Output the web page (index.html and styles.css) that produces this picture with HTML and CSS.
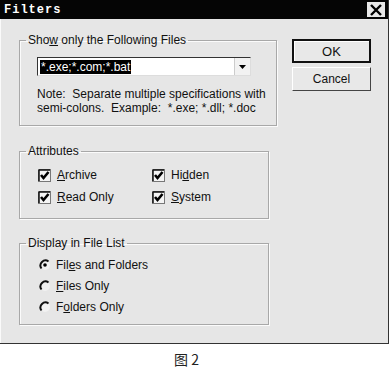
FILE: index.html
```html
<!DOCTYPE html>
<html lang="en">
<head>
  <meta charset="UTF-8">
  <title>Filters</title>
  <link rel="stylesheet" href="styles.css">
</head>
<body>
  <div class="dialog">
    <div class="titlebar">
      <span class="title">Filters</span>
      <span class="close">
        <svg width="14" height="12" viewBox="0 0 14 12"><path d="M2 1 L12 11 M12 1 L2 11" stroke="#000" stroke-width="2.4"/></svg>
      </span>
    </div>

    <div class="dialog-body">
      <div class="groups">
        <fieldset class="group group-files">
          <legend>Sho<u>w</u> only the Following Files</legend>
          <div class="combo">
            <span class="combo-value"><span class="selected">*.exe;*.com;*.bat</span></span>
            <span class="combo-btn">
              <svg width="7" height="4" viewBox="0 0 7 4"><path d="M0 0 H7 L3.5 4 Z" fill="#000"/></svg>
            </span>
          </div>
          <p class="note">Note:  Separate multiple specifications with
semi-colons.  Example:  *.exe; *.dll; *.doc</p>
        </fieldset>

        <fieldset class="group group-attrs">
          <legend>Attributes</legend>
          <div class="checks">
            <label class="check"><span class="box"><svg width="13" height="13" viewBox="0 0 13 13"><rect x="0.5" y="0.5" width="12" height="12" fill="#f4f4f4" stroke="#777"/><path d="M1 1 H12 M1 1 V12" stroke="#111" stroke-width="1.5"/><path d="M3 6 L5.5 9 L10.5 3" fill="none" stroke="#000" stroke-width="2.6"/></svg></span><span><u>A</u>rchive</span></label>
            <label class="check"><span class="box"><svg width="13" height="13" viewBox="0 0 13 13"><rect x="0.5" y="0.5" width="12" height="12" fill="#f4f4f4" stroke="#777"/><path d="M1 1 H12 M1 1 V12" stroke="#111" stroke-width="1.5"/><path d="M3 6 L5.5 9 L10.5 3" fill="none" stroke="#000" stroke-width="2.6"/></svg></span><span>Hi<u>d</u>den</span></label>
            <label class="check"><span class="box"><svg width="13" height="13" viewBox="0 0 13 13"><rect x="0.5" y="0.5" width="12" height="12" fill="#f4f4f4" stroke="#777"/><path d="M1 1 H12 M1 1 V12" stroke="#111" stroke-width="1.5"/><path d="M3 6 L5.5 9 L10.5 3" fill="none" stroke="#000" stroke-width="2.6"/></svg></span><span><u>R</u>ead Only</span></label>
            <label class="check"><span class="box"><svg width="13" height="13" viewBox="0 0 13 13"><rect x="0.5" y="0.5" width="12" height="12" fill="#f4f4f4" stroke="#777"/><path d="M1 1 H12 M1 1 V12" stroke="#111" stroke-width="1.5"/><path d="M3 6 L5.5 9 L10.5 3" fill="none" stroke="#000" stroke-width="2.6"/></svg></span><span><u>S</u>ystem</span></label>
          </div>
        </fieldset>

        <fieldset class="group group-display">
          <legend>Display in File List</legend>
          <div class="radios">
            <label class="radio"><span class="dot"><svg width="12" height="12" viewBox="0 0 12 12"><circle cx="6" cy="6" r="5" fill="#f2f2f2"/><path d="M9.5 2.5 A5 5 0 0 0 2.5 9.5" fill="none" stroke="#111" stroke-width="2"/><circle cx="6" cy="6" r="1.8" fill="#000"/></svg></span><span>Fil<u>e</u>s and Folders</span></label>
            <label class="radio"><span class="dot"><svg width="12" height="12" viewBox="0 0 12 12"><circle cx="6" cy="6" r="5" fill="#f2f2f2"/><path d="M9.5 2.5 A5 5 0 0 0 2.5 9.5" fill="none" stroke="#111" stroke-width="2"/></svg></span><span><u>F</u>iles Only</span></label>
            <label class="radio"><span class="dot"><svg width="12" height="12" viewBox="0 0 12 12"><circle cx="6" cy="6" r="5" fill="#f2f2f2"/><path d="M9.5 2.5 A5 5 0 0 0 2.5 9.5" fill="none" stroke="#111" stroke-width="2"/></svg></span><span>F<u>o</u>lders Only</span></label>
          </div>
        </fieldset>
      </div>

      <div class="buttons">
        <button class="btn btn-default">OK</button>
        <button class="btn">Cancel</button>
      </div>
    </div>
  </div>

  <div class="caption">图 2</div>
</body>
</html>
```

FILE: styles.css
```css
body {
  margin: 0;
  background-color: #fff;
  font-family: "Liberation Sans", Arial, sans-serif;
  font-size: 12px;
  color: #111;
}

.dialog {
  width: 388px;
  height: 343px;
  background-color: #e6e6e6;
  border-right: 1px solid #333;
  border-bottom: 1px solid #333;
  box-shadow: inset 1px 0 0 #fafafa;
}

.titlebar {
  height: 19px;
  background-color: #050505;
  display: flex;
  justify-content: space-between;
  align-items: center;
  padding: 0 3px 0 4px;
}

.title {
  color: #fff;
  font-family: "Liberation Mono", monospace;
  font-weight: bold;
  font-size: 12px;
  letter-spacing: 1px;
}

.close {
  width: 18px;
  height: 15px;
  background-color: #e8e8e8;
  display: flex;
  justify-content: center;
  align-items: center;
}

.dialog-body {
  display: flex;
  padding: 14px 0 0 19px;
}

.groups {
  width: 250px;
}

.group {
  margin: 0;
  border: 1px solid #a8a8a8;
  box-shadow: 1px 1px 0 #fbfbfb, inset 1px 1px 0 #fbfbfb;
  padding: 0 10px 0 18px;
}

.group legend {
  padding: 0 2px;
  margin-left: -12px;
  line-height: 14px;
}

.group-files {
  padding-top: 10px;
  padding-bottom: 10px;
}

.combo {
  display: flex;
  height: 19px;
  width: 214px;
  margin-left: -1px;
  background-color: #fff;
  border-top: 1px solid #333;
  border-left: 1px solid #333;
  border-right: 1px solid #ddd;
  border-bottom: 1px solid #ddd;
  box-sizing: border-box;
}

.combo-value {
  flex: 1;
  padding: 2px 0 0 2px;
}

.selected {
  background-color: #000;
  color: #fff;
  line-height: 13px;
  padding: 0 1px;
}

.combo-btn {
  width: 15px;
  display: flex;
  justify-content: center;
  align-items: center;
  background-color: #f2f2f2;
  border-left: 1px solid #ccc;
}

.note {
  margin: 11px 0 0 -1px;
  line-height: 14px;
  white-space: pre;
}

.group-attrs {
  margin-top: 18px;
  padding-top: 9px;
  padding-bottom: 13px;
}

.checks {
  display: grid;
  grid-template-columns: 114px auto;
  row-gap: 6px;
}

.check,
.radio {
  display: flex;
  align-items: center;
  gap: 6px;
  height: 16px;
}

.box,
.dot {
  display: flex;
}

.group-display {
  margin-top: 17px;
  padding-top: 7px;
  padding-bottom: 9px;
}

.radios {
  display: flex;
  flex-direction: column;
  gap: 5px;
  margin-left: 1px;
}

.radio {
  gap: 5px;
}

.buttons {
  display: flex;
  flex-direction: column;
  gap: 4px;
  margin: 6px 0 0 23px;
}

.btn {
  width: 79px;
  height: 24px;
  font-family: "Liberation Sans", Arial, sans-serif;
  font-size: 12px;
  color: #111;
  background-color: #e8e8e8;
  border: 1px solid #fff;
  border-right-color: #444;
  border-bottom-color: #444;
  padding: 0;
}

.btn-default {
  border: 2px solid #111;
  box-shadow: inset 1px 1px 0 #fff;
  font-size: 13px;
}

.caption {
  width: 389px;
  text-align: center;
  padding-top: 5px;
  padding-right: 16px;
  box-sizing: border-box;
  font-family: "Noto Sans CJK SC", sans-serif;
  font-size: 14px;
  color: #222;
}
```
